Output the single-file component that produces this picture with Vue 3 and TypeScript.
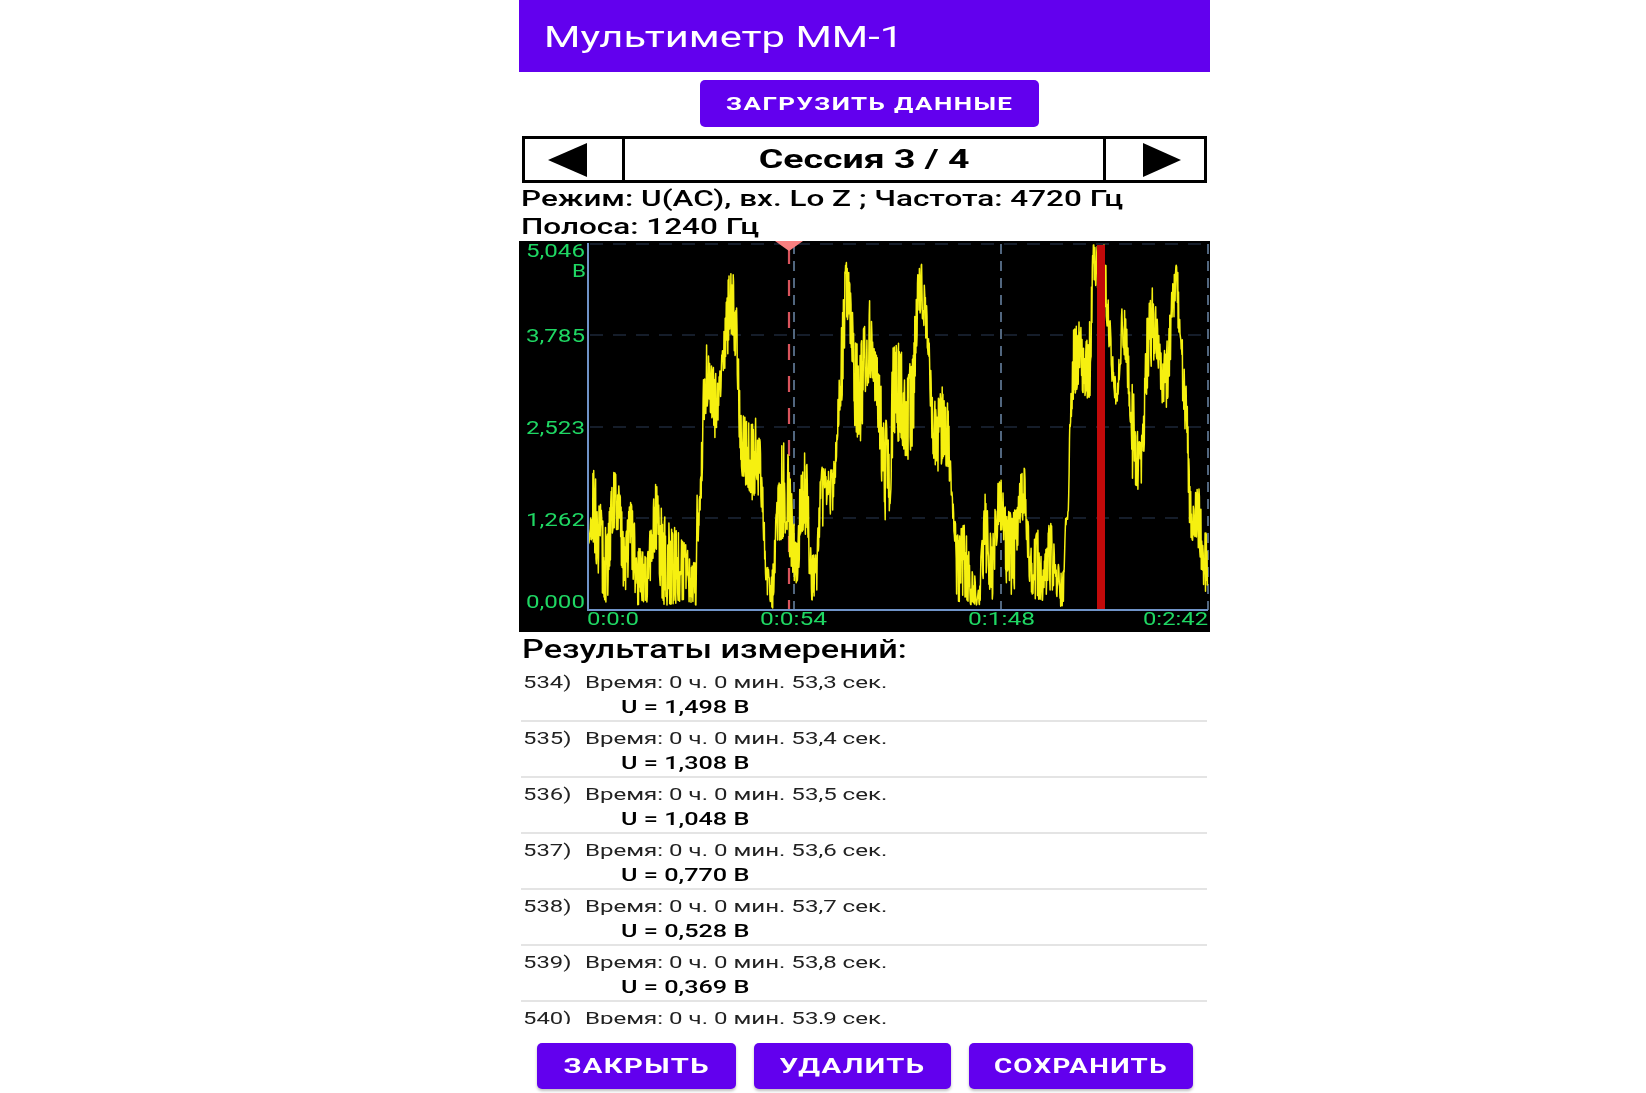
<script setup lang="ts">
interface Row { n: number; t: string; u?: string }
const rows: Row[] = [
  { n: 534, t: '53,3', u: '1,498' },
  { n: 535, t: '53,4', u: '1,308' },
  { n: 536, t: '53,5', u: '1,048' },
  { n: 537, t: '53,6', u: '0,770' },
  { n: 538, t: '53,7', u: '0,528' },
  { n: 539, t: '53,8', u: '0,369' },
  { n: 540, t: '53,9' },
]

// envelope of the trace: [x, top, bottom] in page pixels
const knots: [number, number, number][] = [
  [588,505,545],[590,502,540],[593,466,540],[600,500,590],[607,535,605],[613,472,530],[618,472,530],[625,545,605],
  [630,495,560],[637,540,605],[647,560,603],[655,476,550],[663,515,605],[672,525,605],[683,535,600],[692,565,606],
  [696,560,605],[697,495,560],[700,495,515],[702,430,490],[703,385,430],[707,340,410],[710,360,410],[715,370,440],
  [718,385,420],[723,345,375],[728,280,360],[732,264,335],[737,310,370],[740,400,465],[743,415,480],[752,425,500],
  [757,410,490],[762,460,510],[765,540,570],[768,570,608],[773,565,608],[777,500,540],[782,440,540],[787,445,530],
  [792,495,580],[797,520,585],[803,445,530],[807,465,545],[811,555,600],[817,555,600],[820,465,530],[827,470,520],
  [833,470,510],[836,440,470],[838,400,430],[842,300,400],[847,251,320],[850,285,340],[855,340,430],[860,350,445],
  [865,320,400],[870,297,380],[873,345,380],[878,360,440],[885,420,520],[890,420,510],[893,348,445],[900,342,440],
  [907,382,463],[913,342,445],[918,270,320],[923,260,320],[928,320,352],[932,390,450],[937,400,475],[943,385,460],
  [948,405,470],[952,490,510],[955,520,545],[957,535,607],[960,525,600],[967,525,600],[970,570,605],[980,570,605],
  [983,525,590],[985,493,570],[992,545,605],[997,485,540],[1002,477,530],[1007,510,600],[1015,510,590],[1017,510,550],
  [1022,460,520],[1025,470,520],[1030,550,590],[1038,530,605],[1043,570,600],[1050,517,590],[1055,545,590],[1060,573,607],
  [1064,570,605],[1065,520,545],[1068,510,530],[1070,412,430],[1073,330,400],[1080,318,380],[1083,350,395],[1090,320,400],
  [1093,245,285],[1098,245,300],[1105,245,300],[1107,283,325],[1113,350,395],[1117,400,410],[1120,330,370],[1123,296,345],
  [1127,330,380],[1130,375,420],[1133,385,490],[1137,430,490],[1142,430,490],[1147,315,390],[1153,282,360],[1157,315,360],
  [1162,360,405],[1167,340,410],[1173,278,325],[1177,262,320],[1182,330,355],[1183,360,425],[1187,390,455],[1190,488,535],
  [1195,485,550],[1200,490,555],[1203,530,590],[1208,535,600],
]

function mulberry(seed: number): () => number {
  let a = seed
  return () => {
    a = (a + 0x6d2b79f5) | 0
    let t = Math.imul(a ^ (a >>> 15), 1 | a)
    t = (t + Math.imul(t ^ (t >>> 7), 61 | t)) ^ t
    return ((t ^ (t >>> 14)) >>> 0) / 4294967296
  }
}

function buildTrace(): string {
  const rnd = mulberry(53)
  const pts: string[] = []
  let i = 0
  for (let x = 588; x <= 1208; x += 0.38) {
    while (i < knots.length - 2 && knots[i + 1][0] < x) i++
    const [x0, t0, b0] = knots[i]
    const [x1, t1, b1] = knots[i + 1]
    const f = Math.min(1, (x - x0) / (x1 - x0))
    const top = t0 + (t1 - t0) * f
    const bottom = b0 + (b1 - b0) * f
    // samples favour the edges of the envelope, so the trace reads as dense spikes
    const a = rnd()
    const r = rnd() < 0.5 ? a * a * 0.5 : 1 - a * a * 0.5
    pts.push(`${x.toFixed(1)},${(top + (bottom - top) * r).toFixed(1)}`)
  }
  return pts.join(' ')
}
const trace = buildTrace()

const yLabels = [
  { s: '5,046', y: 257 },
  { s: '3,785', y: 342 },
  { s: '2,523', y: 434 },
  { s: '1,262', y: 526 },
  { s: '0,000', y: 608 },
]
const xLabels = [
  { s: '0:0:0', x: 587, w: 52 },
  { s: '0:0:54', x: 760, w: 67 },
  { s: '0:1:48', x: 968, w: 67 },
  { s: '0:2:42', x: 1143, w: 65 },
]
const hGrid = [244, 335, 427, 518]
const vGrid = [794, 1001, 1208]
</script>

<template>
  <div class="page">
    <header class="bar"><span class="title">Мультиметр ММ-1</span></header>

    <div class="load-row">
      <button class="btn load"><span class="load-t">ЗАГРУЗИТЬ ДАННЫЕ</span></button>
    </div>

    <div class="nav">
      <div class="cell first">
        <svg width="39" height="34" viewBox="0 0 39 34"><polygon points="0,17 39,0 39,34" fill="#000" /></svg>
      </div>
      <div class="cell mid"><span class="session">Сессия 3 / 4</span></div>
      <div class="cell last">
        <svg width="38" height="34" viewBox="0 0 38 34"><polygon points="38,17 0,0 0,34" fill="#000" /></svg>
      </div>
    </div>

    <div class="info">
      <div><span class="info-t">Режим: U(AC), вх. Lo Z ; Частота: 4720 Гц</span></div>
      <div><span class="info-t">Полоса: 1240 Гц</span></div>
    </div>

    <svg class="chart" width="691" height="391" viewBox="519 241 691 391">
      <rect x="519" y="241" width="691" height="391" fill="#000" />
      <line v-for="y in hGrid" :key="y" x1="590" x2="1208" :y1="y" :y2="y" stroke="#2b3a55" stroke-width="1.2" stroke-dasharray="13 10" />
      <line v-for="x in vGrid" :key="x" :x1="x" :x2="x" y1="244" y2="610" stroke="#66809f" stroke-width="1.6" stroke-dasharray="10 7" />
      <line x1="789" x2="789" y1="248" y2="610" stroke="#d9545c" stroke-width="2.2" stroke-dasharray="16 16" />
      <polygon points="775,241 803,241 789,251" fill="#fa8080" />
      <polyline :points="trace" fill="none" stroke="#f6f010" stroke-width="1.5" stroke-linejoin="round" />
      <rect x="1097" y="245" width="8" height="365" fill="#c20a0a" />
      <line x1="588" x2="588" y1="243" y2="611" stroke="#6f93c8" stroke-width="2" />
      <line x1="587" x2="1208" y1="610" y2="610" stroke="#6f93c8" stroke-width="2" />
      <text v-for="l in yLabels" :key="l.s" x="526" :y="l.y" class="axis" textLength="59" lengthAdjust="spacingAndGlyphs">{{ l.s }}</text>
      <text x="572" y="277" class="axis" textLength="14" lengthAdjust="spacingAndGlyphs">В</text>
      <text v-for="l in xLabels" :key="l.s" :x="l.x" y="625" class="axis" :textLength="l.w" lengthAdjust="spacingAndGlyphs">{{ l.s }}</text>
    </svg>

    <div class="heading"><span class="heading-t">Результаты измерений:</span></div>

    <div class="list">
      <div v-for="r in rows" :key="r.n" class="row">
        <div class="line">
          <span class="num">{{ r.n }})</span>
          <span class="time">Время: 0 ч. 0 мин. {{ r.t }} сек.</span>
        </div>
        <div v-if="r.u" class="val"><span class="val-t">U = {{ r.u }} В</span></div>
      </div>
    </div>

    <div class="footer">
      <button class="btn f1"><span class="foot-t">ЗАКРЫТЬ</span></button>
      <button class="btn f2"><span class="foot-t">УДАЛИТЬ</span></button>
      <button class="btn f3"><span class="foot-t save">СОХРАНИТЬ</span></button>
    </div>
  </div>
</template>

<style scoped>
.page {
  margin-left: 519px;
  width: 691px;
  height: 1093px;
  overflow: hidden;
  background: #fff;
  color: #000;
  font-family: Roboto, "Noto Sans", sans-serif;
  filter: blur(0.5px);
}
.page span { display: inline-block; white-space: nowrap; transform-origin: left center; }
.bar {
  height: 72px;
  background: #6200ee;
  padding-left: 25px;
  display: flex;
  align-items: center;
}
.title { color: #fff; font-size: 30px; font-weight: 400; transform: scaleX(1.39); }
.load-row { height: 64px; display: flex; justify-content: center; padding-left: 10px; padding-top: 8px; box-sizing: border-box; }
.btn {
  border: 0;
  margin: 0;
  padding: 0;
  background: #6200ee;
  color: #fff;
  border-radius: 5px;
  display: flex;
  align-items: center;
  justify-content: center;
  font-family: inherit;
}
.page .btn span { transform-origin: center; }
.load { width: 339px; height: 47px; }
.load-t { font-size: 18px; font-weight: 700; letter-spacing: 1px; transform: scaleX(1.44); }
.nav {
  margin: 0 3px;
  height: 47px;
  box-sizing: border-box;
  border: 3px solid #000;
  display: grid;
  grid-template-columns: 97px 1fr 98px;
}
.cell { display: flex; align-items: center; }
.first { justify-content: flex-start; padding-left: 23px; }
.last { justify-content: flex-start; padding-left: 37px; }
.mid { justify-content: center; border-left: 3px solid #000; border-right: 3px solid #000; padding-bottom: 2px; box-sizing: border-box; }
.page .session { font-size: 26px; font-weight: 700; transform: scaleX(1.44); transform-origin: center; }
.info { height: 58px; padding: 3px 0 0 2px; box-sizing: border-box; line-height: 26px; }
.info-t { font-size: 22px; font-weight: 500; transform: scaleX(1.43); }
.chart { display: block; }
.axis { fill: #1fd763; font-size: 18px; font-family: Roboto, sans-serif; }
.heading { height: 34px; padding: 4px 0 0 3px; box-sizing: border-box; line-height: 28px; }
.heading-t { font-size: 25px; font-weight: 500; transform: scaleX(1.37); }
.list { height: 358px; overflow: hidden; margin: 0 3px 0 2px; }
.row { height: 56px; box-sizing: border-box; border-bottom: 2px solid #e4e4e4; padding-top: 4px; }
.line { height: 24px; line-height: 24px; display: flex; color: #222; font-size: 17px; }
.num { width: 62px; margin-left: 2px; transform: scaleX(1.4); }
.time { transform: scaleX(1.415); }
.val { height: 25px; line-height: 25px; padding-left: 100px; font-size: 18px; font-weight: 500; }
.val-t { transform: scaleX(1.4); }
.footer { display: flex; padding: 19px 0 0 18px; }
.btn.f1, .btn.f2, .btn.f3 { box-shadow: 0 2px 3px rgba(0, 0, 0, 0.25); }
.f1 { width: 199px; height: 46px; }
.f2 { width: 197px; height: 46px; margin-left: 18px; }
.f3 { width: 224px; height: 46px; margin-left: 18px; }
.foot-t { font-size: 21px; font-weight: 700; letter-spacing: 1px; transform: scaleX(1.39); }
.foot-t.save { transform: scaleX(1.32); }
</style>
